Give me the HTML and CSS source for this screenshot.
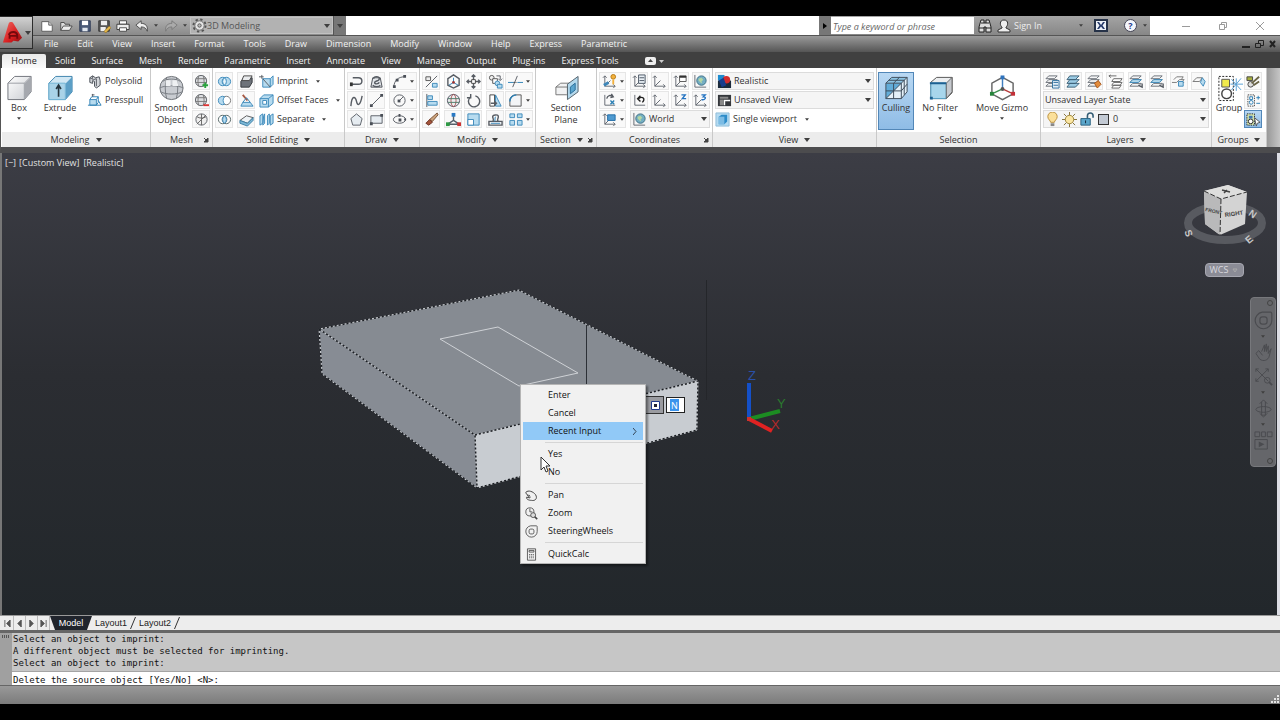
FILE: index.html
```html
<!DOCTYPE html>
<html lang="en">
<head>
<meta charset="utf-8">
<title>3D Modeling</title>
<link rel="stylesheet" href="styles.css">
</head>
<body>
<svg class="sprite" aria-hidden="true">
  <defs>
    <linearGradient id="cubeGrey" x1="0" y1="0" x2="1" y2="1"><stop offset="0" stop-color="#fff"/><stop offset="1" stop-color="#c9ccd1"/></linearGradient>
    <linearGradient id="red" x1="0" y1="0" x2="1" y2="1"><stop offset="0" stop-color="#ef6a63"/><stop offset=".6" stop-color="#d81e20"/><stop offset="1" stop-color="#8d0f12"/></linearGradient>
  </defs>
  <symbol id="caret" viewBox="0 0 6 4"><path d="M0 0h6L3 4z" fill="#3f3f3f"/></symbol>
  <symbol id="launch" viewBox="0 0 6 6"><path d="M1 1l3 3M5 1v4H1z" stroke="#444" fill="#444"/></symbol>
  <symbol id="new" viewBox="0 0 16 16"><path d="M2 3h8l4 4v7H2z" fill="#fff" stroke="#555"/><path d="M10 3v4h4" fill="#ddd" stroke="#555"/></symbol>
  <symbol id="open" viewBox="0 0 16 16"><path d="M2 13V4h4l1 2h5v2" fill="#ddd" stroke="#444"/><path d="M2 13l3-5h10l-3 5z" fill="#eee" stroke="#444"/></symbol>
  <symbol id="save" viewBox="0 0 16 16"><path d="M2 2h12v12H2z" fill="#4a5a78" stroke="#2c3852"/><path d="M4.500 2h7v5h-7z" fill="#fff"/><path d="M5 10h6v4H5z" fill="#dfe5ee"/></symbol>
  <symbol id="saveas" viewBox="0 0 16 16"><path d="M2 2h12v12H2z" fill="#555" stroke="#333"/><path d="M4.500 2h7v5h-7zM4 9h6v5H4z" fill="#eee"/><path d="M8 14l6-6 2 2-6 6z" fill="#e6b84a" stroke="#7a5a14" stroke-width=".6"/></symbol>
  <symbol id="print" viewBox="0 0 16 16"><path d="M4 2h8v4H4z" fill="#fff" stroke="#444"/><path d="M1 6h14v6H1z" fill="#eee" stroke="#333"/><path d="M4 10h8v4H4z" fill="#fff" stroke="#444"/></symbol>
  <symbol id="undo" viewBox="0 0 16 16"><path d="M1 7l6-5v3c5 0 8 3 7 9-1-3-3-5-7-5v3z" fill="#eee" stroke="#444"/></symbol>
  <symbol id="redo" viewBox="0 0 16 16"><path d="M15 7L9 2v3C4 5 1 8 2 14c1-3 3-5 7-5v3z" fill="#aaa" stroke="#777"/></symbol>
  <symbol id="gear" viewBox="0 0 16 16"><circle cx="8" cy="8" r="6.500" fill="none" stroke="#555" stroke-width="2" stroke-dasharray="2.500 2.600"/><circle cx="8" cy="8" r="5" fill="#e4e4e4" stroke="#666"/><circle cx="8" cy="8" r="1.800" fill="#bbb" stroke="#555"/></symbol>
  <symbol id="box" viewBox="0 0 28 28"><path d="M2 9l7-7h17v16l-7 8H2z" fill="url(#cubeGrey)" stroke="#70747b"/><path d="M2 9h17v17M19 9l7-7" fill="none" stroke="#9a9da3"/><path d="M19.500 9L26 2.500V18l-6.500 7.500z" fill="#a5a8ae"/></symbol>
  <symbol id="extrude" viewBox="0 0 28 28"><path d="M2 9l7-7h17v16l-7 8H2z" fill="#d2e8f4" stroke="#3d83ad"/><path d="M2 9h17v17H2z" fill="#a9d3e8" stroke="#71b3d4"/><path d="M19.500 9L26 2.500V18l-6.500 7.500z" fill="#5c9fc6"/><path d="M12 23V12m-2.500 3L12 11l2.500 4" fill="none" stroke="#26343c" stroke-width="1.700"/></symbol>
  <symbol id="polysolid" viewBox="0 0 16 16"><path d="M3 4l3-2 3 2 4-1 1 4v5l-4 3-2-2V8L6 7v3L3 9z" fill="#d5d8dc" stroke="#4a4f57"/><path d="M3 4l4 2 3-1v8M6 2v3" class="k"/></symbol>
  <symbol id="presspull" viewBox="0 0 16 16"><path d="M3 7h7v6H3z" class="lb"/><path d="M1 13h14l-3-5M3 7l2-3h7l-2 3M12 4v6l-2 3" class="b"/><path d="M6 4V1M5 2h3" class="k"/></symbol>
  <symbol id="smooth" viewBox="0 0 28 28"><circle cx="14" cy="14" r="12" fill="#c9ccd1" stroke="#6e7278"/><path d="M2 14c4-3 20-3 24 0M3 18c5 3 17 3 22 0M5 7c5-3 13-3 18 0M9 3c-2 7-2 15 0 22M19 3c2 7 2 15 0 22" fill="none" stroke="#777b81"/><path d="M8 6h5v6H8zM15 6h5l1 6h-6z" fill="#eef0f2"/></symbol>
  <symbol id="ball" viewBox="0 0 16 16"><circle cx="7.500" cy="7.500" r="6" fill="#dcdee1" stroke="#5d6167"/><path d="M2 5h11M1.500 9h12M5 2c-1 4-1 8 0 11M10 2c1 4 1 8 0 11" fill="none" stroke="#777"/></symbol>
  <symbol id="ballplus" viewBox="0 0 16 16"><use href="#ball"/><path d="M9 12h6M12 9v6" stroke="#27a33b" stroke-width="2"/></symbol>
  <symbol id="ballminus" viewBox="0 0 16 16"><use href="#ball"/><path d="M10 13h6" stroke="#d33" stroke-width="2"/></symbol>
  <symbol id="ballno" viewBox="0 0 16 16"><circle cx="8" cy="8" r="6" fill="#eee" stroke="#5d6167"/><path d="M3 13L13 3M8 2v12M3 5c3 2 7 2 10 0" fill="none" stroke="#666"/></symbol>
  <symbol id="union" viewBox="0 0 16 16"><circle cx="6" cy="8" r="4.500" class="lb"/><circle cx="10" cy="8" r="4.500" class="lb"/><ellipse cx="8" cy="8" rx="2" ry="3.500" fill="#eaf5fb" class="s"/></symbol>
  <symbol id="subtract" viewBox="0 0 16 16"><circle cx="10" cy="8" r="4.500" fill="#fff" stroke="#777"/><path d="M8 4a4.500 4.500 0 1 0 0 8c-2-3-2-5 0-8z" class="lb"/></symbol>
  <symbol id="intersect" viewBox="0 0 16 16"><circle cx="6" cy="8" r="4.500" fill="#fff" stroke="#566"/><circle cx="10" cy="8" r="4.500" fill="none" stroke="#566"/><ellipse cx="8" cy="8" rx="2" ry="3.800" class="lb"/></symbol>
  <symbol id="slab" viewBox="0 0 16 16"><path d="M2 8l3-4h9v5l-3 5H2z" fill="#6e737a" stroke="#33373c"/><path d="M5 2h9L11 7H3z" fill="#e9ebed" stroke="#444"/></symbol>
  <symbol id="taper" viewBox="0 0 16 16"><path d="M2 14l2-4h8l3 4z" class="lb"/><path d="M4 2l5 6" stroke="#a85a44" stroke-width="2" fill="none"/><path d="M4 10l4-5 4 5" class="b"/></symbol>
  <symbol id="shell" viewBox="0 0 16 16"><path d="M1 9l7-5 7 2-6 6z" fill="#eef3f6" stroke="#555"/><path d="M1 9v3l8 3 6-6V6l-6 6z" fill="#7eb9d8" stroke="#3d7fa5"/></symbol>
  <symbol id="imprint" viewBox="0 0 16 16"><path d="M4 5h8v9H4zM12 5l3-3v9l-3 3" class="lb"/><path d="M0 3h5M3 1v4M4 5l8 9" class="k"/></symbol>
  <symbol id="offset" viewBox="0 0 16 16"><path d="M1 6h9v9H1zM1 6l4-4h10v9l-5 4M10 6l5-4" class="lb"/><path d="M4 8h4v4H4z" fill="#fff" class="s"/></symbol>
  <symbol id="separate" viewBox="0 0 16 16"><path d="M1 4l3-2v10l-3 2zM5 4l1-2v10l-2 2zM9 4l2-2v10l-2 2zM12 4l3-2v10l-3 2z" class="lb"/></symbol>
  <symbol id="pline" viewBox="0 0 16 16"><path d="M4 4h6c5 0 5 7 0 7H2" class="k w"/><path d="M1 9h3v4H1z" fill="#333"/></symbol>
  <symbol id="loft" viewBox="0 0 16 16"><path d="M2 14L4 4h8l2 10z" fill="#e3e6ea" stroke="#474c53"/><path d="M5 5c0-3 6-3 6 0s-5 2-5 4 4 2 5 0M4 12c2 2 7 2 8 0" class="k w"/></symbol>
  <symbol id="arc" viewBox="0 0 16 16"><path d="M2 14C2 7 7 3 13 3" class="k"/><path d="M1 12h3v3H1zM4 5h3v3H4zM12 1h3v3h-3z" class="d"/></symbol>
  <symbol id="spline" viewBox="0 0 16 16"><path d="M2 14C3 1 7 4 8 9s4 5 6-6" class="k w"/></symbol>
  <symbol id="line" viewBox="0 0 16 16"><path d="M2 14L14 2" class="k"/><path d="M1 12h3v3H1zM12 1h3v3h-3z" class="d"/></symbol>
  <symbol id="circle" viewBox="0 0 16 16"><circle cx="8" cy="8" r="6" class="k"/><path d="M8 8l4-4" class="k"/><path d="M6 7h3v3H6z" class="d"/></symbol>
  <symbol id="polygon" viewBox="0 0 16 16"><path d="M8 2l6 5-2 7H4L2 7z" fill="#e6ecf1" stroke="#5b6067"/></symbol>
  <symbol id="rect" viewBox="0 0 16 16"><path d="M2 4h12v8H2z" fill="#e6ecf1" stroke="#5b6067"/><path d="M1 11h3v3H1zM12 2h3v3h-3z" class="d"/></symbol>
  <symbol id="ellipse" viewBox="0 0 16 16"><ellipse cx="8" cy="8" rx="6.500" ry="4" class="k"/><path d="M7 7h3v3H7zM7 2h2v3H7zM13 7h2v2h-2z" class="d"/></symbol>
  <symbol id="align3" viewBox="0 0 16 16"><path d="M2 14L14 2" class="k"/><path d="M2 3h5v4H2z" fill="#eee" stroke="#555"/><path d="M9 10h5v4H9z" class="lb"/></symbol>
  <symbol id="align" viewBox="0 0 16 16"><path d="M3 1v14" class="k"/><path d="M4 3h5v4H4zM4 9h10v4H4z" class="lb"/></symbol>
  <symbol id="erase" viewBox="0 0 16 16"><path d="M14 1l1 2-6 7-3-2z" fill="#c9a27c" stroke="#7a5238"/><path d="M6 8l3 3-4 3-3-2z" fill="#a4543b" stroke="#6d3324"/></symbol>
  <symbol id="gizmo" viewBox="0 0 16 16"><path d="M8 1l6 4v7l-6 3-6-3V5z" class="k w"/><path d="M8 9V4M8 9l-5 3M8 9l5 3" class="b"/><circle cx="8" cy="9" r="1.500" fill="#933"/></symbol>
  <symbol id="globe" viewBox="0 0 16 16"><circle cx="8" cy="8" r="6.500" fill="#eceef0" stroke="#556"/><ellipse cx="8" cy="8" rx="2.700" ry="6.500" fill="none" stroke="#a55"/><path d="M2 6h12M2 10h12" stroke="#4d7a66" fill="none"/></symbol>
  <symbol id="tri" viewBox="0 0 16 16"><path d="M8 3v6l-6 4h12L8 9" fill="none" stroke="#55606a" stroke-width="1.500"/><path d="M6 1h4v4H6z" fill="#2979c4"/><path d="M0 11h4v4H0z" fill="#2f9a45"/><path d="M12 11h4v4h-4z" fill="#c33"/></symbol>
  <symbol id="move" viewBox="0 0 16 16"><path d="M8 1v14M1 8h14M6 3l2-2 2 2M6 13l2 2 2-2M3 6L1 8l2 2M13 6l2 2-2 2" class="k w"/><path d="M6 6h4v4H6z" fill="#fff" stroke="#444"/></symbol>
  <symbol id="rotate" viewBox="0 0 16 16"><path d="M5 4a6 6 0 1 0 5-1" class="k w"/><path d="M5 1v4H1" class="k w"/></symbol>
  <symbol id="scale" viewBox="0 0 16 16"><path d="M2 2h12v12H2z" class="lb"/><path d="M2 8h6v6H2z" fill="#fff" class="s"/></symbol>
  <symbol id="copy" viewBox="0 0 16 16"><circle cx="4" cy="4" r="2.500" fill="#eee" stroke="#555"/><path d="M5 5h5v5H5z" fill="#fff" stroke="#555"/><circle cx="10" cy="10" r="2.500" class="lb"/><path d="M10 11h5v4h-5z" class="lb"/><path d="M9 2h4v4M11 5l2 2 2-2" class="k"/></symbol>
  <symbol id="mirror" viewBox="0 0 16 16"><path d="M2 2v12h5V2z" fill="#fff" stroke="#444"/><path d="M8 2l6 12H8z" class="lb"/><path d="M3 11h6M7 9l2 2-2 2" class="k w"/></symbol>
  <symbol id="stamp" viewBox="0 0 16 16"><path d="M1 10h14v4H1zM5 10c2-2 0-3 0-5s6-3 6 0-2 3 0 5" class="k w"/><path d="M3 12h10M7 10c1-2 0-3 1-5" class="b"/></symbol>
  <symbol id="trim" viewBox="0 0 16 16"><path d="M0 9h6M10 9h6" class="b"/><path d="M10 2L5 14" class="k"/><path d="M6 9h4" stroke="#222" stroke-dasharray="1 1"/></symbol>
  <symbol id="fillet" viewBox="0 0 16 16"><path d="M2 14V8c0-4 3-6 7-6h5v12z" fill="#f3f5f7" stroke="#555"/><path d="M2 9c0-4 3-7 7-7" class="b w"/></symbol>
  <symbol id="array" viewBox="0 0 16 16"><path d="M2 2h5v4H2zM10 2h5v4h-5zM2 9h5v5H2zM10 9h5v5h-5z" class="lb"/></symbol>
  <symbol id="section" viewBox="0 0 28 28"><path d="M3 13l5-4h11v9l-5 3H3z" fill="#f1f2f3" stroke="#777"/><path d="M3 13h12v8" fill="none" stroke="#777"/><path d="M15 10l11-8v16l-11 8z" fill="#b3d8ec" stroke="#52616b"/><path d="M18 13l5-4v7l-5 4z" fill="#5ba5ce" stroke="#2b6d99"/></symbol>
  <symbol id="ucs" viewBox="0 0 16 16"><path d="M3 2v11h11M1 4l2-2 2 2M12 11l2 2-2 2M3 13l6-6" fill="none" stroke="#626870"/></symbol>
  <symbol id="ucskey" viewBox="0 0 16 16"><use href="#ucs"/><circle cx="12" cy="3" r="2.500" fill="#f3b13c" stroke="#b67a14"/><path d="M12 6v5" stroke="#f3b13c" stroke-width="2"/><path d="M2 12l5-3" stroke="#3d86b8" stroke-width="3"/></symbol>
  <symbol id="ucsx" viewBox="0 0 16 16"><path d="M3 2v11h11" fill="none" stroke="#626870"/><path d="M5 6c1-4 4-4 7-2M10 1l2 3-3 1" class="k w"/><path d="M9 8l4 4M13 8l-4 4" class="b w"/></symbol>
  <symbol id="ucsview" viewBox="0 0 16 16"><use href="#ucs"/><path d="M6 3h8v6H6z" fill="#4f9ad0" stroke="#1f6aa5"/></symbol>
  <symbol id="ucsdlg" viewBox="0 0 16 16"><use href="#ucs"/><path d="M7 1h7v9H7zM8 4h5M8 7h5" fill="#e8eef4" stroke="#4b5663"/></symbol>
  <symbol id="ucswin" viewBox="0 0 16 16"><use href="#ucs"/><path d="M7 2h7v6H7z" fill="#fff" stroke="#555"/><path d="M7 3h7" stroke="#333" stroke-width="2"/></symbol>
  <symbol id="ucsworld" viewBox="0 0 16 16"><path d="M2 1v13h12" fill="none" stroke="#626870"/><circle cx="9" cy="7" r="5" fill="#74aec3" stroke="#3c6f85"/><path d="M6 5l3-1 2 2-2 2 1 2-2-1-2-2z" fill="#b5d7a2"/></symbol>
  <symbol id="ucsprev" viewBox="0 0 16 16"><path d="M3 2v11h11" fill="none" stroke="#626870"/><path d="M7 6c4-3 8 0 4 4M9 3L6 6l3 3" fill="none" stroke="#222" stroke-width="1.500"/></symbol>
  <symbol id="ucsz" viewBox="0 0 16 16"><use href="#ucs"/><path d="M9 2h4l-3 4h4" fill="none" stroke="#2474c2" stroke-width="1.500"/></symbol>
  <symbol id="ucs3" viewBox="0 0 16 16"><use href="#ucs"/><path d="M9 2h4l-2 2c4 0 2 4-2 3" fill="none" stroke="#2474c2" stroke-width="1.500"/></symbol>
  <symbol id="realistic" viewBox="0 0 16 16"><path d="M1 1h7v6H1z" fill="#1d8ccf"/><path d="M1 7h14v8H1z" fill="#1b2a3b"/><circle cx="10" cy="6" r="4" fill="#d42c2c"/><path d="M2 7l5-3 3 8-5 2z" fill="#173c8c"/></symbol>
  <symbol id="views" viewBox="0 0 16 16"><path d="M1 2h14v12H1z" fill="#34373b"/><path d="M3 4h9v2H3zM3 7h4v6H3z" fill="#888"/><path d="M8 13V8h6" fill="none" stroke="#fff" stroke-width="1.500"/></symbol>
  <symbol id="vport" viewBox="0 0 16 16"><path d="M1 1h14v14H1z" fill="#b4dbf2" stroke="#8fbcd8"/><path d="M4 5l3-2h6v7l-3 3H4z" fill="#2d8cc9"/><path d="M4 5h6v8H4z" fill="#7dbce4"/></symbol>
  <symbol id="culling" viewBox="0 0 28 28"><path d="M3 9l6-6h16v15l-6 7H3z" fill="#e4f0f8"/><path d="M3 9h16L3 25z" fill="#62acd8"/><path d="M9 3h16l-6 6H3z" fill="#8dc4e4"/><path d="M3 9l6-6h16v15l-6 7H3zM3 9h16v16M19 9l6-6M3 17h16l6-7M11 9v16M11 9l6-6M22 6v15M6 6h16M3 25L19 9" fill="none" stroke="#3c4b59"/></symbol>
  <symbol id="nofilter" viewBox="0 0 28 28"><path d="M4 8l6-5h16v16l-6 6H4z" fill="#eceef0" stroke="#555"/><path d="M4 9h16v16H4z" fill="#a8d6ec" stroke="#539fc5"/><path d="M20 9l6-6v15l-6 7z" fill="#c6c9ce" stroke="#666"/><path d="M3 23h3v3H3zM3 8h17v2H3z" fill="#1d6192"/></symbol>
  <symbol id="movegizmo" viewBox="0 0 28 28"><path d="M14 3l11 6v11l-11 6-11-6V9z" fill="none" stroke="#666" stroke-width="1.500"/><path d="M14 3v12" stroke="#3f7ec0" stroke-width="1.500"/><path d="M14 15L3 20" stroke="#3d8f50" stroke-width="1.500"/><path d="M14 15l11 5" stroke="#b63c3c" stroke-width="1.500"/><path d="M12 1h4v4h-4z" fill="#2f73bd"/><path d="M1 18h4v4H1z" fill="#26843b"/><path d="M23 18h4v4h-4z" fill="#c22f37"/><circle cx="14" cy="15" r="2" fill="#555"/></symbol>
  <symbol id="layers" viewBox="0 0 16 16"><path d="M4 2h9l-3 3H1zM4 6h9l-3 3H1zM4 10h9l-3 3H1z" fill="#f4f5f6" stroke="#6a6f76"/></symbol>
  <symbol id="lay1" viewBox="0 0 16 16"><use href="#layers"/><path d="M8 7h7v8H8zM9 9h5M9 12h5" fill="#e4eff7" stroke="#2f6f9d"/></symbol>
  <symbol id="lay2" viewBox="0 0 16 16"><path d="M4 2h10l-4 4H1zM4 6h10l-4 4H1zM4 10h10l-4 4H1z" fill="#9bcbe4" stroke="#3c6177"/></symbol>
  <symbol id="lay3" viewBox="0 0 16 16"><use href="#layers"/><path d="M8 10l4-3 3 4-4 4z" fill="#e38c3b" stroke="#a65418"/></symbol>
  <symbol id="lay4" viewBox="0 0 16 16"><path d="M6 5h9l-2 3H4zM6 9h9l-2 3H4zM6 12h8l-2 3H4zM1 2h8M1 2l2-1M1 2l2 2" fill="#fff" stroke="#666"/></symbol>
  <symbol id="lay5" viewBox="0 0 16 16"><use href="#layers"/><path d="M4 6h9l-3 3H1z" class="lb"/><path d="M10 12l4 2v-4" class="k w"/></symbol>
  <symbol id="lay6" viewBox="0 0 16 16"><path d="M1 9h5l3-3h5l-3 3h3M3 6l3-3h7l-2 3" fill="none" stroke="#777"/><path d="M8 8h5v5H8z" class="lb"/></symbol>
  <symbol id="lay7" viewBox="0 0 16 16"><path d="M1 8h7l3-4H5z" fill="none" stroke="#777"/><path d="M11 4l3 4-2 5-3-4z" class="lb"/></symbol>
  <symbol id="bulb" viewBox="0 0 16 16"><path d="M6 11c0-2-3-3-3-6a5 5 0 0 1 10 0c0 3-3 4-3 6z" fill="#fbe09a" stroke="#b98e3b"/><path d="M6 12h4v3H6z" fill="#888"/></symbol>
  <symbol id="sun" viewBox="0 0 16 16"><path d="M8 0v16M0 8h16M2 2l12 12M14 2L2 14" stroke="#806f35"/><circle cx="8" cy="8" r="4.500" fill="#fbe6a2" stroke="#9d843c"/></symbol>
  <symbol id="lock" viewBox="0 0 16 16"><path d="M9 7V4c0-4 6-4 6 0v2" fill="none" stroke="#355e75" stroke-width="1.700"/><path d="M2 7h10v7H2z" fill="#5ba6cb" stroke="#285f7e"/><path d="M7 9v3" stroke="#123"/></symbol>
  <symbol id="group" viewBox="0 0 28 28"><path d="M3 2h15v25H3z" fill="none" stroke="#222" stroke-dasharray="2 1.500"/><path d="M6 5h8v8H6z" fill="#f1ea4c" stroke="#555"/><circle cx="11" cy="20" r="5" fill="#fff" stroke="#444" stroke-width="1.500"/><path d="M21 4v13M15 10h13M16 5l10 11M26 4L16 16" stroke="#58a0d4"/></symbol>
  <symbol id="g1" viewBox="0 0 16 16"><path d="M1 3h6v4H1z" fill="#a6ae3d" stroke="#444"/><circle cx="5" cy="11" r="3" fill="#ddd" stroke="#444"/><path d="M6 10l8-7M8 12l6-4" stroke="#6a6446" stroke-width="2"/></symbol>
  <symbol id="g2" viewBox="0 0 16 16"><path d="M2 2h7v12H2z" fill="none" stroke="#444" stroke-dasharray="1.500 1"/><circle cx="5.500" cy="10" r="2" class="b"/><path d="M4 4h3v3H4zM11 5h4M13 3v4M11 11h4" class="b"/></symbol>
  <symbol id="g3" viewBox="0 0 16 16"><path d="M1 2h8v12H1z" fill="#d9e9b0" stroke="#222" stroke-dasharray="1.500 1"/><circle cx="5" cy="10" r="2.500" fill="#fff" stroke="#222"/><path d="M3 4h4v3H3z" fill="#3f76b0"/><path d="M9 6l6 5-3 1-1 3z" fill="#fff" stroke="#555"/></symbol>
  <symbol id="wheel" viewBox="0 0 16 16"><path d="M7 1h7c1 0 1 1 1 2v5a7 7 0 1 1-8-7z" fill="none" stroke="currentColor"/><rect x="5" y="5" width="6" height="6" rx="2" fill="none" stroke="currentColor"/></symbol>
  <symbol id="pan" viewBox="0 0 16 16"><path d="M1 4c3-3 9-1 12 3 3 5-1 8-5 7-4 0-7-2-6-4l4 1M1 4c0 3 3 4 5 4M3 7c0 2 2 3 4 3" fill="none" stroke="currentColor" stroke-width="1.200"/></symbol>
  <symbol id="zoom" viewBox="0 0 16 16"><circle cx="6" cy="6" r="5" fill="none" stroke="currentColor"/><path d="M6 2v4h3" fill="none" stroke="currentColor"/><circle cx="10" cy="10" r="3" fill="#ddd" stroke="currentColor"/><path d="M12 12l3 3" stroke="currentColor" stroke-width="2"/></symbol>
  <symbol id="calc" viewBox="0 0 16 16"><path d="M3 1h10v14H3zM5 3h6v2H5z" fill="none" stroke="currentColor"/><path d="M5 8h6M5 10h6M5 12h6" stroke="currentColor" stroke-dasharray="1.500 1"/></symbol>
  <symbol id="hand" viewBox="0 0 20 20"><path d="M5 8l-3 3 4 6c4 3 9 1 10-3l2-8-3 5V3l-2 6V1l-2 8V2L8 9M5 8l4 5" fill="none" stroke="currentColor"/></symbol>
  <symbol id="extents" viewBox="0 0 20 20"><path d="M2 2l13 13M15 2L2 15M2 5V2h3M12 2h3v3M2 12v3h3" fill="none" stroke="currentColor"/><circle cx="14" cy="14" r="3" fill="none" stroke="currentColor"/><path d="M16 16l3 3" stroke="currentColor" stroke-width="2"/></symbol>
  <symbol id="orbit" viewBox="0 0 20 20"><ellipse cx="10" cy="11" rx="8" ry="3" fill="none" stroke="currentColor"/><path d="M8 3v14h4V3M6 5l4-4 4 4M6 15l4 4 4-4" fill="none" stroke="currentColor"/></symbol>
  <symbol id="motion" viewBox="0 0 20 20"><path d="M1 1h5v5H1zM8 1h4v5H8zM14 1h5v5h-5zM1 9h13v10H1z" fill="none" stroke="currentColor"/><path d="M5 11l6 3-6 3z" fill="currentColor"/></symbol>
</svg>

<header class="frame">
  <button class="app-button" aria-label="Application menu">
    <svg class="app-logo" viewBox="0 0 22 26"><path d="M1 23L7 3c1-2 4-2 5 0l9 15-4 4-5-1-2 2z" fill="url(#red)"/><path d="M7 15c2-4 8-4 9 0v4M8 19v-3h7" fill="none" stroke="#74090c" stroke-width="2"/></svg>
    <svg class="caret"><use href="#caret"/></svg>
  </button>
  <div class="titlebar">
    <div class="quick">
      <button aria-label="New"><svg class="qi"><use href="#new"/></svg></button>
      <button aria-label="Open"><svg class="qi"><use href="#open"/></svg></button>
      <button aria-label="Save"><svg class="qi"><use href="#save"/></svg></button>
      <button aria-label="Save as"><svg class="qi"><use href="#saveas"/></svg></button>
      <button aria-label="Plot"><svg class="qi"><use href="#print"/></svg></button>
      <button aria-label="Undo"><svg class="qi"><use href="#undo"/></svg></button>
      <button class="thin" aria-label="Undo list"><svg class="dot"><use href="#caret"/></svg></button>
      <button aria-label="Redo"><svg class="qi"><use href="#redo"/></svg></button>
      <button class="thin" aria-label="Redo list"><svg class="dot"><use href="#caret"/></svg></button>
      <div class="workspace"><svg class="i"><use href="#gear"/></svg><select aria-label="Workspace"><option>3D Modeling</option></select><svg class="caret"><use href="#caret"/></svg></div>
      <button class="more" aria-label="Customize"><svg class="caret"><use href="#caret"/></svg></button>
    </div>
    <div class="info">
      <button class="expand" aria-label="Collapse search"><svg viewBox="0 0 4 6" width="4" height="6"><path d="M0 0l4 3-4 3z"/></svg></button>
      <input class="search" type="search" placeholder="Type a keyword or phrase" aria-label="Search">
      <button class="find" aria-label="Find"><svg width="14" height="14" viewBox="0 0 14 14"><path d="M3 1h3v3h2V1h3l2 7v5H8V8H6v5H1V8z" fill="#ddd" stroke="#222"/><path d="M3 4h3M8 4h3M1 9h5M8 9h5" stroke="#222"/></svg></button>
      <button class="sign"><svg width="14" height="14" viewBox="0 0 14 14"><path d="M7 1c5 0 4 6 2 7v1l4 2v2H1v-2l4-2V8C3 7 2 1 7 1z" fill="#eee" stroke="#333"/></svg><span>Sign In</span></button>
      <svg class="dot"><use href="#caret"/></svg>
      <button class="xchange" aria-label="Exchange"><svg width="14" height="13" viewBox="0 0 14 13"><path d="M1 1h12v11H1z" fill="#eef2f8" stroke="#263248" stroke-width="2"/><path d="M3 3h2l2 3 2-3h2L8.500 6.500 11 10H9L7 7.500 5 10H3l2.500-3.500z" fill="#263a6b"/></svg></button>
      <button class="help" aria-label="Help">?</button>
      <svg class="dot"><use href="#caret"/></svg>
    </div>
    <div class="window-buttons">
      <button aria-label="Minimize"><svg width="10" height="10" viewBox="0 0 10 10"><path d="M1 5.500h8"/></svg></button>
      <button aria-label="Restore"><svg width="10" height="10" viewBox="0 0 10 10"><path d="M1.500 3.500h5v5h-5zM3.500 3V1.500h5v5H7"/></svg></button>
      <button aria-label="Close"><svg width="10" height="10" viewBox="0 0 10 10"><path d="M1 1l8 8M9 1L1 9"/></svg></button>
    </div>
  </div>
  <nav class="menubar">
    <button>File</button><button>Edit</button><button>View</button><button>Insert</button><button>Format</button><button>Tools</button><button>Draw</button><button>Dimension</button><button>Modify</button><button>Window</button><button>Help</button><button>Express</button><button>Parametric</button>
    <span class="doc-buttons"><svg width="36" height="10" viewBox="0 0 36 10"><path d="M1 8h8" stroke="#222" stroke-width="2"/><path d="M14.500 4.500h5v4h-5zM17.500 4V1.500h5v5H20" fill="none" stroke="#222"/><path d="M29 2l5 6M34 2l-5 6" stroke="#222" stroke-width="2"/></svg></span>
  </nav>
  <nav class="tabs">
    <button class="active">Home</button><button>Solid</button><button>Surface</button><button>Mesh</button><button>Render</button><button>Parametric</button><button>Insert</button><button>Annotate</button><button>View</button><button>Manage</button><button>Output</button><button>Plug-ins</button><button>Express Tools</button>
    <button class="tab-toggle" aria-label="Minimize ribbon"><svg width="20" height="8" viewBox="0 0 20 8"><rect width="11" height="8" rx="2" fill="#eee"/><path d="M3 5h5L5.500 2z" fill="#444"/><path d="M14 3h5l-2.500 3z" fill="#ccc"/></svg></button>
  </nav>
</header>

<main class="ribbon">
  <section class="panel p-modeling">
    <div class="body">
      <button class="big"><svg><use href="#box"/></svg>Box<svg class="dot"><use href="#caret"/></svg></button>
      <button class="big"><svg><use href="#extrude"/></svg>Extrude<svg class="dot"><use href="#caret"/></svg></button>
      <div class="col wide"><button class="row"><svg class="i"><use href="#polysolid"/></svg>Polysolid</button><button class="row"><svg class="i"><use href="#presspull"/></svg>Presspull</button></div>
    </div>
    <h2>Modeling<svg class="caret"><use href="#caret"/></svg></h2>
  </section>
  <section class="panel p-mesh">
    <div class="body">
      <button class="big"><svg><use href="#smooth"/></svg>Smooth<br>Object</button>
      <div class="col"><button class="ib"><svg class="i"><use href="#ballplus"/></svg></button><button class="ib"><svg class="i"><use href="#ballminus"/></svg></button><button class="ib"><svg class="i"><use href="#ballno"/></svg></button></div>
    </div>
    <h2>Mesh<svg class="launch"><use href="#launch"/></svg></h2>
  </section>
  <section class="panel p-solid">
    <div class="body">
      <div class="col"><button class="ib"><svg class="i"><use href="#union"/></svg></button><button class="ib"><svg class="i"><use href="#subtract"/></svg></button><button class="ib"><svg class="i"><use href="#intersect"/></svg></button></div>
      <div class="col"><button class="ib"><svg class="i"><use href="#slab"/></svg></button><button class="ib"><svg class="i"><use href="#taper"/></svg></button><button class="ib"><svg class="i"><use href="#shell"/></svg></button></div>
      <div class="col"><button class="row"><svg class="i"><use href="#imprint"/></svg>Imprint<svg class="dot"><use href="#caret"/></svg></button><button class="row"><svg class="i"><use href="#offset"/></svg>Offset Faces<svg class="dot"><use href="#caret"/></svg></button><button class="row"><svg class="i"><use href="#separate"/></svg>Separate<svg class="dot"><use href="#caret"/></svg></button></div>
    </div>
    <h2>Solid Editing<svg class="caret"><use href="#caret"/></svg></h2>
  </section>
  <section class="panel p-draw">
    <div class="body">
      <div class="pair"><button class="ib"><svg class="i"><use href="#pline"/></svg></button><button class="ib"><svg class="i"><use href="#loft"/></svg></button><button class="ib"><svg class="i"><use href="#spline"/></svg></button><button class="ib"><svg class="i"><use href="#line"/></svg></button><button class="ib"><svg class="i"><use href="#polygon"/></svg></button><button class="ib"><svg class="i"><use href="#rect"/></svg></button></div>
      <div class="col"><button class="ib split"><svg class="i"><use href="#arc"/></svg><svg class="dot"><use href="#caret"/></svg></button><button class="ib split"><svg class="i"><use href="#circle"/></svg><svg class="dot"><use href="#caret"/></svg></button><button class="ib split"><svg class="i"><use href="#ellipse"/></svg><svg class="dot"><use href="#caret"/></svg></button></div>
    </div>
    <h2>Draw<svg class="caret"><use href="#caret"/></svg></h2>
  </section>
  <section class="panel p-modify">
    <div class="body">
      <div class="col"><button class="ib"><svg class="i"><use href="#align3"/></svg></button><button class="ib"><svg class="i"><use href="#align"/></svg></button><button class="ib"><svg class="i"><use href="#erase"/></svg></button></div>
      <div class="pair"><button class="ib"><svg class="i"><use href="#gizmo"/></svg></button><button class="ib"><svg class="i"><use href="#move"/></svg></button><button class="ib"><svg class="i"><use href="#globe"/></svg></button><button class="ib"><svg class="i"><use href="#rotate"/></svg></button><button class="ib"><svg class="i"><use href="#tri"/></svg></button><button class="ib"><svg class="i"><use href="#scale"/></svg></button></div>
      <div class="split-pair">
        <div class="col"><button class="ib"><svg class="i"><use href="#copy"/></svg></button><button class="ib"><svg class="i"><use href="#mirror"/></svg></button><button class="ib"><svg class="i"><use href="#stamp"/></svg></button></div>
        <div class="col"><button class="ib split"><svg class="i"><use href="#trim"/></svg><svg class="dot"><use href="#caret"/></svg></button><button class="ib split"><svg class="i"><use href="#fillet"/></svg><svg class="dot"><use href="#caret"/></svg></button><button class="ib split"><svg class="i"><use href="#array"/></svg><svg class="dot"><use href="#caret"/></svg></button></div>
      </div>
    </div>
    <h2>Modify<svg class="caret"><use href="#caret"/></svg></h2>
  </section>
  <section class="panel p-section">
    <div class="body"><button class="big"><svg><use href="#section"/></svg>Section<br>Plane</button></div>
    <h2>Section<svg class="caret"><use href="#caret"/></svg><svg class="launch"><use href="#launch"/></svg></h2>
  </section>
  <section class="panel p-coord">
    <div class="body">
      <div class="col"><button class="ib split"><svg class="i"><use href="#ucskey"/></svg><svg class="dot"><use href="#caret"/></svg></button><button class="ib split"><svg class="i"><use href="#ucsx"/></svg><svg class="dot"><use href="#caret"/></svg></button><button class="ib split"><svg class="i"><use href="#ucsview"/></svg><svg class="dot"><use href="#caret"/></svg></button></div>
      <div class="col grow">
        <div class="line spread"><button class="ib"><svg class="i"><use href="#ucsdlg"/></svg></button><button class="ib"><svg class="i"><use href="#ucs"/></svg></button><button class="ib"><svg class="i"><use href="#ucswin"/></svg></button><button class="ib"><svg class="i"><use href="#ucsworld"/></svg></button></div>
        <div class="line spread"><button class="ib"><svg class="i"><use href="#ucsprev"/></svg></button><button class="ib"><svg class="i"><use href="#ucs"/></svg></button><button class="ib"><svg class="i"><use href="#ucsz"/></svg></button><button class="ib"><svg class="i"><use href="#ucs3"/></svg></button></div>
        <div class="drop"><svg class="i"><use href="#ucsworld"/></svg><select aria-label="Coordinate system"><option>World</option></select><svg class="caret"><use href="#caret"/></svg></div>
      </div>
    </div>
    <h2>Coordinates<svg class="launch"><use href="#launch"/></svg></h2>
  </section>
  <section class="panel p-view">
    <div class="body"><div class="col grow">
      <div class="drop"><svg class="i"><use href="#realistic"/></svg><select aria-label="Visual style"><option>Realistic</option></select><svg class="caret"><use href="#caret"/></svg></div>
      <div class="drop"><svg class="i"><use href="#views"/></svg><select aria-label="View"><option>Unsaved View</option></select><svg class="caret"><use href="#caret"/></svg></div>
      <button class="row"><svg class="i"><use href="#vport"/></svg>Single viewport<svg class="dot"><use href="#caret"/></svg></button>
    </div></div>
    <h2>View<svg class="caret"><use href="#caret"/></svg></h2>
  </section>
  <section class="panel p-selection">
    <div class="body">
      <button class="big on"><svg><use href="#culling"/></svg>Culling</button>
      <button class="big"><svg><use href="#nofilter"/></svg>No Filter<svg class="dot"><use href="#caret"/></svg></button>
      <button class="big"><svg><use href="#movegizmo"/></svg>Move Gizmo<svg class="dot"><use href="#caret"/></svg></button>
    </div>
    <h2>Selection</h2>
  </section>
  <section class="panel p-layers">
    <div class="body"><div class="col grow">
      <div class="line spread"><button class="ib"><svg class="i"><use href="#lay1"/></svg></button><button class="ib"><svg class="i"><use href="#lay2"/></svg></button><button class="ib"><svg class="i"><use href="#lay3"/></svg></button><button class="ib"><svg class="i"><use href="#lay4"/></svg></button><button class="ib"><svg class="i"><use href="#lay5"/></svg></button><button class="ib"><svg class="i"><use href="#lay5"/></svg></button><button class="ib"><svg class="i"><use href="#lay6"/></svg></button><button class="ib"><svg class="i"><use href="#lay7"/></svg></button></div>
      <div class="drop"><select aria-label="Layer state"><option>Unsaved Layer State</option></select><svg class="caret"><use href="#caret"/></svg></div>
      <div class="drop"><svg class="i"><use href="#bulb"/></svg><svg class="i"><use href="#sun"/></svg><svg class="i"><use href="#lock"/></svg><span class="swatch"></span><select aria-label="Layer"><option>0</option></select><svg class="caret"><use href="#caret"/></svg></div>
    </div></div>
    <h2>Layers<svg class="caret"><use href="#caret"/></svg></h2>
  </section>
  <section class="panel p-groups">
    <div class="body">
      <button class="big"><svg><use href="#group"/></svg>Group</button>
      <div class="col"><button class="ib"><svg class="i"><use href="#g1"/></svg></button><button class="ib"><svg class="i"><use href="#g2"/></svg></button><button class="ib on"><svg class="i"><use href="#g3"/></svg></button></div>
    </div>
    <h2>Groups<svg class="caret"><use href="#caret"/></svg></h2>
  </section>
  <div class="ribbon-end"></div>
</main>

<section class="viewport">
  <svg class="scene">
    <g transform="translate(-2 -153)">
      <path d="M706.500 280V400" stroke="#24262a"/>
      <path d="M319 329L519 290 698 381 475 435z" fill="#868b92"/>
      <path d="M319 329L475 435 477 488 322 374z" fill="#878c94"/>
      <path d="M475 435L698 381 697 430 477 488z" fill="#c8ccd1"/>
      <path d="M586.500 324V400" stroke="#2c3036"/>
      <path d="M319 329L519 290 698 381 475 435zM319 329L322 374 477 488 475 435M477 488L697 430 698 381" fill="none" stroke="#c5c8cc"/>
      <path d="M319 329L519 290 698 381 475 435zM319 329L322 374 477 488 475 435M477 488L697 430 698 381" fill="none" stroke="#1c1f24" stroke-dasharray="2 2" stroke-width="1.500"/>
      <path d="M440 339L498 327 578 373 519 386z" fill="none" stroke="#cfd2d6"/>
      <path d="M749 419V383" stroke="#1450c8" stroke-width="4"/>
      <path d="M749 419L780 411" stroke="#1c8c22" stroke-width="4"/>
      <path d="M749 419L772 431" stroke="#e02222" stroke-width="4"/>
      <path d="M747 417h4v4h-4z" fill="#d0302c"/>
      <g class="axis"><text x="748" y="380" fill="#2a50a8">Z</text><text x="777" y="408" fill="#2b7a2f">Y</text><text x="771" y="429" fill="#b52a2a">X</text></g>
    </g>
  </svg>
  <div class="view-label"><button>[−]</button><button>[Custom View]</button><button>[Realistic]</button></div>

  <div class="navigator">
    <svg width="88" height="70" viewBox="0 0 88 70">
      <ellipse cx="45" cy="43" rx="37" ry="17" fill="none" stroke="#585a60" stroke-width="8"/>
      <path d="M24 11L48 5 67 12 65 44 40 55 25 44z" fill="#d3d3d3"/>
      <path d="M24 11L41 19 40 55 25 44z" fill="#b9b9ba"/>
      <path d="M24 11L48 5 67 12 41 19z" fill="#dededd"/>
      <path d="M24 11L41 19 67 12M41 19L40 55" fill="none" stroke="#333" stroke-dasharray="5 2"/>
      <path d="M42 10l8 2M44 13l3-3" stroke="#444" stroke-width="1.500"/>
      <text x="45" y="37" class="face" transform="rotate(-8 45 37)">RIGHT</text>
      <text x="25" y="31" class="face small" transform="rotate(12 25 31)">FRONT</text>
      <text x="5" y="56" class="compass" transform="rotate(70 8 53)">S</text>
      <text x="66" y="63" class="compass" transform="rotate(-40 69 60)">E</text>
      <text x="69" y="37" class="compass" transform="rotate(35 72 34)">N</text>
    </svg>
    <button class="wcs">WCS<svg width="6" height="5" viewBox="0 0 6 5"><path d="M1 1h4L3 4z" fill="none" stroke="#aaa"/></svg></button>
  </div>
  <div class="navbar">
    <svg class="corner" viewBox="0 0 6 6"><circle cx="3" cy="3" r="2.500" fill="none" stroke="#444"/></svg>
    <button aria-label="Steering wheel"><svg class="ni"><use href="#wheel"/></svg></button>
    <svg class="dot"><use href="#caret"/></svg>
    <button aria-label="Pan"><svg class="ni"><use href="#hand"/></svg></button>
    <button aria-label="Zoom extents"><svg class="ni"><use href="#extents"/></svg></button>
    <svg class="dot"><use href="#caret"/></svg>
    <button aria-label="Orbit"><svg class="ni"><use href="#orbit"/></svg></button>
    <svg class="dot"><use href="#caret"/></svg>
    <button aria-label="Show motion"><svg class="ni"><use href="#motion"/></svg></button>
    <svg class="corner end" viewBox="0 0 6 6"><circle cx="3" cy="3" r="2.500" fill="none" stroke="#444"/></svg>
  </div>

  <div class="dynamic">
    <button aria-label="Options"><svg width="9" height="9" viewBox="0 0 9 9"><path d="M.5.5h8v8h-8z" fill="#fff" stroke="#223a8c"/><path d="M3 3h3v3H3z" fill="#223"/></svg></button>
    <input value="N" aria-label="Delete the source object">
  </div>

  <div class="context" role="menu">
    <button>Enter</button>
    <button>Cancel</button>
    <button class="hot">Recent Input<svg class="sub" viewBox="0 0 4 7"><path d="M0 0l3 3.500L0 7" fill="none" stroke="#345"/></svg></button>
    <hr>
    <button>Yes</button>
    <button>No</button>
    <hr>
    <button><svg class="ci"><use href="#pan"/></svg>Pan</button>
    <button><svg class="ci"><use href="#zoom"/></svg>Zoom</button>
    <button><svg class="ci"><use href="#wheel"/></svg>SteeringWheels</button>
    <hr>
    <button><svg class="ci"><use href="#calc"/></svg>QuickCalc</button>
  </div>
  <svg class="pointer" viewBox="0 0 12 18"><path d="M1 1v13l3-3 2 5 2-1-2-5h4z" fill="#fff" stroke="#333"/></svg>
</section>

<nav class="layouts">
  <button class="step" aria-label="First"><svg viewBox="0 0 8 8"><path d="M1 0v8M7 0v8L3 4z"/></svg></button>
  <button class="step" aria-label="Previous"><svg viewBox="0 0 8 8"><path d="M6 0v8L2 4z"/></svg></button>
  <button class="step" aria-label="Next"><svg viewBox="0 0 8 8"><path d="M2 0v8l4-4z"/></svg></button>
  <button class="step" aria-label="Last"><svg viewBox="0 0 8 8"><path d="M7 0v8M1 0v8l4-4z"/></svg></button>
  <button class="model">Model</button>
  <button class="layout">Layout1</button>
  <svg class="slash" viewBox="0 0 6 12"><path d="M5.500 0L.5 12"/></svg>
  <button class="layout">Layout2</button>
  <svg class="slash" viewBox="0 0 6 12"><path d="M5.500 0L.5 12"/></svg>
</nav>

<section class="command">
  <div class="grip"></div>
  <div class="console">
    <div class="history"><div>Select an object to imprint:</div><div>A different object must be selected for imprinting.</div><div>Select an object to imprint:</div></div>
    <div class="prompt"><label for="cmd">Delete the source object [Yes/No] &lt;N&gt;:</label><input id="cmd"></div>
  </div>
</section>
<footer class="status"><svg width="10" height="10" viewBox="0 0 10 10"><path d="M8 1v9M5 4v6M2 7v3" stroke="#e4e4e4" stroke-width="2" stroke-dasharray="2 1"/></svg></footer>
</body>
</html>
```
FILE: styles.css
```css
* { box-sizing: border-box; }
body {
  margin: 0;
  padding: 16px 0;
  min-height: 100vh;
  display: flex;
  flex-direction: column;
  background: #000;
  color: #333;
  font: 9px/12px "Open Sans", "Noto Sans", sans-serif;
}
button, select, input {
  margin: 0;
  padding: 0;
  border: 0;
  background: none;
  color: inherit;
  font: inherit;
  border-radius: 0;
  outline: 0;
}
select { appearance: none; flex: 1; min-width: 0; }
svg { display: block; flex: none; }
.sprite { position: absolute; width: 0; height: 0; }
.k { fill: none; stroke: #575c63; }
.b { fill: none; stroke: #2b7fb4; }
.w { stroke-width: 1.500; }
.lb { fill: #b7dbef; stroke: #3d8abb; }
.s { stroke: #3d8abb; }
.d { fill: #4a4f57; }
.i { width: 15px; height: 15px; }
.caret { width: 6px; height: 4px; }
.dot { width: 4px; height: 3px; }

/* Title bar */
.frame { position: relative; }
.titlebar { display: flex; justify-content: space-between; height: 20px; background: #fff; border-bottom: 1px solid #555; }
.app-button {
  position: absolute; top: 0; left: 0; z-index: 1;
  width: 33px; height: 33px;
  display: flex; align-items: center; gap: 2px; padding-left: 2px;
  background: linear-gradient(#d2d2d2, #7c7c7c);
  border: 1px solid #2c2c2c; border-left: 0;
}
.app-logo { width: 21px; height: 26px; }
.quick { display: flex; align-items: center; padding-left: 37px; background: linear-gradient(#b4b4b4, #8a8a8a); }
.quick button { width: 19px; height: 19px; display: flex; align-items: center; justify-content: center; }
.quick .thin { width: 10px; }
.quick .more { width: 13px; background: #777; border-left: 1px solid #555; }
.qi { width: 14px; height: 14px; }
.workspace { display: flex; align-items: center; gap: 0; width: 143px; height: 17px; padding: 0 2px 0 1px; background: #b2b2b2; border: 1px solid #c2c2c2; color: #555; }
.info { display: flex; align-items: center; width: 331px; margin-left: auto; padding-right: 3px; background: linear-gradient(#a4a4a4, #878787); }
.expand { width: 12px; height: 19px; display: grid; place-items: center; background: #777; }
.search { width: 143px; height: 17px; padding: 2px 2px 0; background: #fff; font-style: italic; }
.search::placeholder { color: #666; opacity: 1; }
.find { margin-left: 4px; }
.sign { display: flex; align-items: center; gap: 3px; flex: 1; margin-left: 5px; color: #eee; }
.xchange { margin: 0 16px 0 11px; }
.help { width: 13px; height: 13px; margin-right: 6px; border-radius: 50%; border: 1px solid #445; background: #f4f6fb; color: #1c3a8c; font-weight: 700; line-height: 11px; }
.window-buttons { display: flex; align-items: center; gap: 27px; padding: 0 15px 0 31px; }
.window-buttons svg { fill: none; stroke: #9a9a9a; }

/* Menus and tabs */
.menubar { display: flex; align-items: center; gap: 19px; height: 16px; padding: 0 3px 0 44px; background: linear-gradient(#9a9a9a, #555); color: #f2f2f2; }
.doc-buttons { margin-left: auto; }
.tabs { display: flex; height: 16px; padding-left: 2px; background: #404040; color: #f0f0f0; gap: 16px; }
.tabs button { padding-top: 1px; }
.tabs .active { width: 44px; margin: 2px -7px 0 0; padding: 0; background: linear-gradient(#e9e9e9, #fafafa); color: #222; border-radius: 2px 2px 0 0; }
.tabs .tab-toggle { display: flex; align-items: center; margin-left: 10px; }

/* Ribbon */
.ribbon { display: flex; height: 85px; padding-left: 1px; background: #fff; border-bottom: 6px solid #4c4c4e; border-left: 1px solid #555; }
.panel { display: flex; flex-direction: column; border-right: 1px solid #c9c9c9; }
.body { flex: 1; display: flex; padding: 4px 2px 0; }
.panel h2 { display: flex; align-items: center; justify-content: center; gap: 6px; height: 15px; margin: 0; background: #ececec; font-size: 9px; font-weight: 400; position: relative; }
.launch { width: 6px; height: 6px; position: absolute; right: 3px; top: 5px; }
.p-modeling { flex: 1 1 149px; }
.p-mesh { flex: 1 1 62px; }
.p-solid { flex: 1 1 132px; }
.p-draw { flex: 1 1 75px; }
.p-modify { flex: 1 1 116px; }
.p-section { flex: 1 1 61px; }
.p-coord { flex: 1 1 116px; }
.p-view { flex: 1 1 164px; }
.p-selection { flex: 1 1 164px; }
.p-layers { flex: 1 1 171px; }
.p-groups { flex: 1 1 55px; }
.ribbon-end { flex: 0 0 13px; background: linear-gradient(90deg, #999, #c5c5c5); }
.big { display: flex; flex-direction: column; align-items: center; height: 58px; padding-top: 1px; flex: none; text-align: center; border: 1px solid transparent; }
.big > svg:first-child { width: 27px; height: 28px; }
.big .dot { margin-top: 3px; }
.col { display: flex; flex-direction: column; gap: 1px; }
.grow { flex: 1; min-width: 0; }
.pair { display: grid; grid-template-columns: 18px 18px; gap: 1px 2px; align-content: start; }
.split-pair { display: flex; gap: 1px; }
.line { display: flex; gap: 2px; }
.ib { display: flex; align-items: center; justify-content: center; width: 18px; height: 18px; background: #f9f9f9; border: 1px solid #e6e6e6; }
.split { width: 28px; gap: 3px; }
.on { background: linear-gradient(#b9d8f3, #8fbce6); border: 1px solid #5287b8; }
.row { display: flex; align-items: center; gap: 3px; height: 18px; white-space: nowrap; }
.row .dot { margin-left: 5px; }
.drop { display: flex; align-items: center; gap: 2px; height: 18px; padding: 0 2px 0 1px; background: #f5f5f5; border: 1px solid #dcdcdc; }
.p-modeling .body { gap: 9px; padding-left: 1px; }
.p-modeling .big { width: 32px; }
.p-modeling .wide { margin-left: 2px; }
.p-mesh .body { gap: 3px; }
.p-mesh .big { width: 36px; }
.p-solid .body { gap: 4px; }
.p-draw .body { gap: 4px; }
.p-modify .body { gap: 4px; }
.p-section .big { width: 56px; }
.p-section h2 { justify-content: flex-start; padding-left: 4px; }
.p-coord .body { gap: 4px; }
.p-coord .split { width: 27px; }
.p-selection .body { gap: 1px; padding-left: 1px; }
.p-selection .big { width: 36px; }
.p-selection .big + .big { width: 50px; }
.p-selection .big + .big + .big { width: 62px; margin-left: 5px; }
.spread { justify-content: space-between; }
.p-groups .big { width: 30px; }
.swatch { width: 11px; height: 11px; margin-left: 2px; background: #c3cad4; border: 1px solid #333; }
.swatch + select { padding-left: 2px; }

/* Drawing area */
.viewport { position: relative; flex: 1; min-height: 300px; overflow: hidden; background: linear-gradient(#3c3d45, #2b2d32 48%, #22272b); border-left: 2px solid #777; border-right: 3px solid #dcdde4; }
.scene { position: absolute; width: 100%; height: 100%; }
.axis { font: 13px/13px "Liberation Sans", sans-serif; }
.view-label { position: absolute; left: 3px; top: 4px; display: flex; gap: 3px; color: #e2e2e2; }
.view-label button + button + button { margin-left: 1px; }
.navigator { position: absolute; right: 9px; top: 27px; width: 88px; display: flex; flex-direction: column; align-items: center; }
.face { font: 700 6px "Liberation Sans", sans-serif; fill: #444; }
.face.small { font-size: 5px; }
.compass { font: 700 10px "Liberation Sans", sans-serif; fill: #c8c8c8; }
.wcs { display: flex; align-items: center; justify-content: center; gap: 4px; width: 39px; height: 14px; margin-top: 13px; background: #8b8c96; border: 1px solid #a6a7b0; border-radius: 4px; color: #d8d8de; }
.navbar { position: absolute; right: 1px; top: 144px; width: 26px; height: 170px; display: flex; flex-direction: column; align-items: center; gap: 5px; padding: 2px; background: #65666a; border: 1px solid #77787c; border-radius: 4px; color: #4a4b4f; }
.ni { width: 19px; height: 19px; }
.corner { width: 6px; height: 6px; align-self: flex-end; }
.corner.end { margin-top: auto; }
.dynamic { position: absolute; left: 643px; top: 243px; display: flex; align-items: center; gap: 2px; }
.dynamic button { width: 19px; height: 18px; display: grid; place-items: center end; padding-right: 3px; background: #9a9ba0; border: 1px solid #333; }
.dynamic input { width: 19px; height: 16px; padding: 0 4px; border: 1px solid #222; color: #fff; background: linear-gradient(#3b93ec, #3b93ec) 3px 1px / 9px 12px no-repeat #fff; }
.context { position: absolute; left: 518px; top: 231px; width: 126px; padding-top: 1px; border: 1px solid #b5b5b5; background: #f1f1f1; box-shadow: 2px 2px 2px rgba(0, 0, 0, .4); color: #111; }
.context button { position: relative; display: flex; align-items: center; width: 100%; height: 18px; padding-left: 27px; text-align: left; }
.context .hot { background: #91c9f7; background-clip: content-box; padding: 0 2px; text-indent: 25px; }
.context hr { height: 1px; margin: 2px 2px 2px 24px; border: 0; background: #d6d6d6; }
.ci { position: absolute; left: 4px; top: 3px; width: 13px; height: 13px; color: #444; }
.sub { position: absolute; right: 8px; top: 6px; width: 4px; height: 7px; }
.pointer { position: absolute; left: 538px; top: 303px; width: 12px; height: 18px; }

/* Layout tabs */
.layouts { display: flex; align-items: center; height: 15px; padding-left: 2px; background: #ededed; border-top: 1px solid #999; font-family: "Liberation Sans", sans-serif; color: #222; }
.step { width: 12px; height: 14px; display: grid; place-items: center; border-right: 1px solid #bbb; }
.step svg { width: 7px; height: 7px; fill: #555; stroke: #555; }
.model { width: 42px; height: 14px; background: #20242c; color: #fff; clip-path: polygon(0 0, 100% 0, 88% 100%, 12% 100%); }
.layout { padding: 0 3px; }
.slash { width: 6px; height: 12px; fill: none; stroke: #333; }

/* Command line */
.command { display: flex; height: 56px; border-top: 3px solid #666; border-bottom: 1px solid #666; background: #a0a0a0; color: #111; font-family: "DejaVu Sans Mono", "Liberation Mono", monospace; }
.grip { width: 12px; height: 6px; background: repeating-linear-gradient(90deg, #555 0 1px, transparent 1px 2px) 2px 2px / 8px 3px no-repeat; }
.console { flex: 1; display: flex; flex-direction: column; }
.history { flex: 1; padding: 0 1px; background: #c6c6c6; border-bottom: 1px solid #a4a4a4; }
.prompt { display: flex; align-items: center; height: 13px; padding: 2px 0 0 1px; background: #fff; }
.prompt input { flex: 1; }
.status { display: flex; align-items: flex-end; justify-content: flex-end; height: 18px; background: linear-gradient(#999, #7b7b7b); }
```
